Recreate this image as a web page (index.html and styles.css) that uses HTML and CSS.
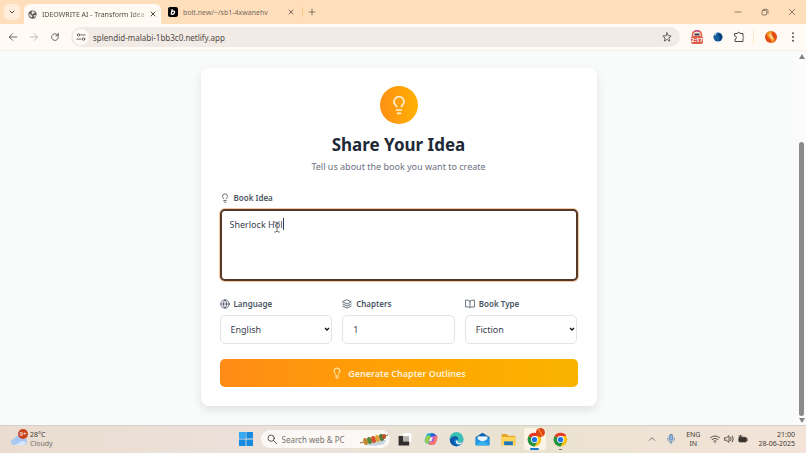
FILE: index.html
```html
<!DOCTYPE html>
<html lang="en">
<head>
    <meta charset="UTF-8">
    <meta name="viewport" content="width=device-width, initial-scale=1.0">
    <title>IDEOWRITE AI - Transform Idea</title>
    <link rel="stylesheet" href="styles.css">
</head>
<body>
    <!-- shared icons -->
    <svg class="defs" aria-hidden="true">
        <symbol id="bulb" viewBox="0 0 24 24"><path d="M15 14c.2-1 .7-1.700 1.500-2.500 1-.9 1.500-2.200 1.500-3.500A6 6 0 0 0 6 8c0 1 .2 2.200 1.500 3.500.7.7 1.300 1.500 1.500 2.500M9 18h6M10 22h4"/></symbol>
        <symbol id="close" viewBox="0 0 24 24"><path d="M4 4l16 16M20 4L4 20"/></symbol>
        <symbol id="chevron" viewBox="0 0 24 24"><path d="M4 8l8 8 8-8"/></symbol>
        <symbol id="globe" viewBox="0 0 24 24"><circle cx="12" cy="12" r="10"/><path d="M12 2a14.500 14.500 0 0 0 0 20 14.500 14.500 0 0 0 0-20M2 12h20"/></symbol>
        <symbol id="chrome" viewBox="0 0 24 24">
            <circle cx="12" cy="12" r="11" fill="#fbc116"/>
            <path d="M12 12L2.500 6.500A11 11 0 0 1 21.500 6.500H12z" fill="#e33b2e"/>
            <path d="M2.500 6.500A11 11 0 0 0 12 23l4.800-8.300L12 12z" fill="#229342"/>
            <circle cx="12" cy="12" r="5.500" fill="#fff"/>
            <circle cx="12" cy="12" r="4.200" fill="#1a73e8"/>
        </symbol>
    </svg>

    <!-- browser tabs -->
    <header class="tabs">
        <button class="tab-search" aria-label="Search tabs"><svg class="icon bold s6"><use href="#chevron"/></svg></button>
        <div class="tab active">
            <svg class="s9" viewBox="0 0 24 24"><circle cx="12" cy="12" r="11" fill="#5c5a5a"/><path d="M3 10c4 0 3 3 6 4s3 3 1 6c-4-1-7-5-7-10zM11 3c3 0 6 1 8 4-2 2-4 0-5 3s-4 1-5-2c0-2 2-2 2-5zM15 14l6-1c0 3-2 5-4 6z" fill="#eee8e2"/></svg>
            <span class="tab-title">IDEOWRITE AI - Transform Idea</span>
            <button aria-label="Close tab"><svg class="icon bold s6"><use href="#close"/></svg></button>
        </div>
        <div class="tab">
            <svg class="s10" viewBox="0 0 24 24"><rect width="24" height="24" rx="5" fill="#050505"/><path d="M10 5L7.500 18M8 12c4-4 9-2 7.500 2s-6 4.500-8 2" fill="none" stroke="#fff" stroke-width="3"/></svg>
            <span class="tab-title">bolt.new/~/sb1-4xwanehv</span>
            <button aria-label="Close tab"><svg class="icon bold s6"><use href="#close"/></svg></button>
        </div>
        <button class="new-tab" aria-label="New tab"><svg class="icon s8" viewBox="0 0 24 24"><path d="M12 3v18M3 12h18"/></svg></button>
        <div class="window-buttons">
            <button aria-label="Minimize"><svg class="icon s8" viewBox="0 0 24 24"><path d="M3 12h18"/></svg></button>
            <button aria-label="Restore"><svg class="icon s8" viewBox="0 0 24 24"><rect x="3" y="7" width="14" height="14" rx="3"/><path d="M8 4h9a4 4 0 0 1 4 4v8"/></svg></button>
            <button aria-label="Close"><svg class="icon s8"><use href="#close"/></svg></button>
        </div>
    </header>

    <!-- address bar -->
    <nav class="toolbar">
        <button aria-label="Back"><svg class="icon s10" viewBox="0 0 24 24"><path d="M21 12H4M11 4l-8 8 8 8"/></svg></button>
        <button class="disabled" aria-label="Forward"><svg class="icon s10" viewBox="0 0 24 24"><path d="M3 12h17M13 4l8 8-8 8"/></svg></button>
        <button aria-label="Reload"><svg class="icon s10" viewBox="0 0 24 24"><path d="M20 12a8 8 0 1 1-3-6l3 3M20 3v6h-6"/></svg></button>
        <div class="address">
            <button class="site-info" aria-label="Site information"><svg class="icon s10" viewBox="0 0 24 24"><circle cx="6" cy="7" r="3"/><circle cx="18" cy="17" r="3"/><path d="M12 7h10M2 17h10"/></svg></button>
            <input type="text" value="splendid-malabi-1bb3c0.netlify.app" aria-label="Address">
            <button aria-label="Bookmark"><svg class="icon s10" viewBox="0 0 24 24"><path d="M12 2l3 7 7 .6-5.400 4.900L18.500 22 12 17.800 5.500 22l1.900-7.500L2 9.600 9 9z"/></svg></button>
        </div>
        <div class="extensions">
            <button class="timer" aria-label="Recorder"><svg viewBox="0 0 24 12"><path d="M3 12V9q0-7 9-7t9 7v3" fill="#f7e7dd" stroke="#e0604c" stroke-width="3"/><path d="M7 2q5-2 10 0" fill="none" stroke="#a44bbd" stroke-width="2"/><path d="M7 9h10" stroke="#3d3a42" stroke-width="4"/></svg><span>2:17</span></button>
            <button aria-label="Extension"><svg class="s10" viewBox="0 0 24 24"><circle cx="12" cy="12" r="11" fill="#175b9d"/><path d="M12 3q9 1 10 9-2 8-9 10 4-4 3-9t-4-10z" fill="#083b70"/><path d="M2 8q3-6 9-7-4 2-4 7z" fill="#c4e3f4"/></svg></button>
            <button aria-label="Extensions"><svg class="icon s12" viewBox="0 0 24 24"><path d="M4 5h5a2.500 2.500 0 0 1 5 0h6v6a2.500 2.500 0 0 1 0 4v6H4v-5a2.500 2.500 0 0 0 0-6z"/></svg></button>
        </div>
        <button class="profile" aria-label="Profile"><svg viewBox="0 0 24 24"><circle cx="12" cy="12" r="12" fill="#e34d16"/><path d="M4 4q6-5 12-3-5 3-3 7l7 9q-3 6-8 6 2-5-3-8T4 4z" fill="#f69a20"/><path d="M8 7l4-2 5 11-4 1z" fill="#ffd593"/></svg></button>
        <button aria-label="Menu"><svg class="s10" viewBox="0 0 24 24"><g fill="#514b47"><circle cx="12" cy="3" r="2.300"/><circle cx="12" cy="12" r="2.300"/><circle cx="12" cy="21" r="2.300"/></g></svg></button>
    </nav>

    <div class="viewport">
        <main class="page">
            <form class="card">
                <div class="badge"><svg class="icon s20"><use href="#bulb"/></svg></div>
                <h1>Share Your Idea</h1>
                <p class="subtitle">Tell us about the book you want to create</p>

                <label class="label" for="idea"><svg class="icon s10"><use href="#bulb"/></svg>Book Idea</label>
                <div class="idea-box">
                    <textarea id="idea">Sherlock Hol</textarea>
                    <span class="caret"></span>
                    <svg class="pointer" viewBox="0 0 8 12"><path d="M1 1h2l1 1 1-1h2M4 2v8M1 11h2l1-1 1 1h2"/></svg>
                </div>

                <div class="fields">
                    <div class="field">
                        <label class="label" for="language"><svg class="icon s10"><use href="#globe"/></svg>Language</label>
                        <div class="select-box">
                            <select id="language"><option>English</option></select>
                            <svg class="arrow"><use href="#chevron"/></svg>
                        </div>
                    </div>
                    <div class="field">
                        <label class="label" for="chapters"><svg class="icon s10" viewBox="0 0 24 24"><path d="M12 2l10 5-10 5L2 7zM2 12l10 5 10-5M2 17l10 5 10-5"/></svg>Chapters</label>
                        <input type="text" inputmode="numeric" id="chapters" value="1">
                    </div>
                    <div class="field">
                        <label class="label" for="type"><svg class="icon s10" viewBox="0 0 24 24"><path d="M12 6q-1-3-4-3H1v16h7q3 0 4 2 1-2 4-2h7V3h-7q-3 0-4 3zv15"/></svg>Book Type</label>
                        <div class="select-box">
                            <select id="type"><option>Fiction</option></select>
                            <svg class="arrow"><use href="#chevron"/></svg>
                        </div>
                    </div>
                </div>

                <button type="button" class="generate"><svg class="icon s12"><use href="#bulb"/></svg>Generate Chapter Outlines</button>
            </form>
        </main>
        <div class="scrollbar">
            <svg viewBox="0 0 6 5"><path d="M3 0l3 5H0z"/></svg>
            <div class="thumb"></div>
            <svg viewBox="0 0 6 5"><path d="M3 5l3-5H0z"/></svg>
        </div>
    </div>

    <!-- taskbar -->
    <footer class="taskbar">
        <div class="weather">
            <div class="weather-icon">
                <svg viewBox="0 0 16 12"><path d="M3 12a3 3 0 0 1 0-6 5 5 0 0 1 9-1 3.500 3.500 0 0 1 1 7z" fill="#a9c8f3"/><path d="M3 12q5-1 8-4 3 0 4 2-1 2-3 2z" fill="#d9e8fb"/></svg>
                <span>9+</span>
            </div>
            <div>28°C<br><span class="muted">Cloudy</span></div>
        </div>
        <div class="apps">
            <button aria-label="Start"><svg class="s14" viewBox="0 0 14 14"><path d="M0 0h6.600v6.600H0zM7.400 0H14v6.600H7.400zM0 7.400h6.600V14H0zM7.400 7.400H14V14H7.400z" fill="#168be0"/><path d="M0 0h6.600v6.600H0z" fill="#36a9ef"/></svg></button>
            <div class="search">
                <svg class="icon s10" viewBox="0 0 24 24"><circle cx="10" cy="10" r="7.500"/><path d="M16 16l7 7"/></svg>
                <input type="text" placeholder="Search web &amp; PC" aria-label="Search">
                <svg class="kebab" viewBox="0 0 28 13"><path d="M4 10q10-5 22-3l-2 4q-8 3-19 1z" fill="#c6d3de"/><path d="M0 10L28 2" stroke="#9b6a3c"/><g stroke-width="4" stroke-linecap="round"><path d="M5 7l1 3" stroke="#c88b35"/><path d="M9 6l1 3" stroke="#58883b"/><path d="M13 5l1 3" stroke="#d8502e"/><path d="M17 4l1 3" stroke="#e0a43b"/><path d="M21 3l1 3" stroke="#577b36"/><path d="M24 3l0 1" stroke="#b9552d"/></g></svg>
            </div>
            <button aria-label="Task view"><svg class="s14" viewBox="0 0 24 24"><path d="M8 2h15v15H8z" fill="#fff"/><path d="M1 7h8v9h10v7H1z" fill="#302e2d"/><path d="M9 7h10v9H9z" fill="#b8b3ae"/></svg></button>
            <button aria-label="Copilot"><svg class="s14" viewBox="0 0 24 24"><path d="M8 2h8l-4 14q-1 4-5 4-5 0-6-4 0-4 3-10 1-4 4-4z" fill="#1baed3"/><path d="M2 13q2-7 5-7h5L9 17q-1 3-4 3-4-1-3-7z" fill="#9acb51"/><path d="M16 22H8l4-14q1-4 5-4 6 0 6 5-1 6-3 10-1 3-4 3z" fill="#b65ad4"/><path d="M10 17h6l3-11q4 1 4 5l-3 8q-1 3-4 3H8q2-1 2-5z" fill="#f57c62"/><path d="M12 2h4q3 0 4 5h-5q-2 0-3 3-2-4 0-8z" fill="#2464d4"/><path d="M11 9h4l-2 7H9z" fill="#f3ebe6"/></svg></button>
            <button aria-label="Edge"><svg class="s15" viewBox="0 0 24 24"><circle cx="12" cy="12" r="11" fill="#1279c8"/><path d="M1 11a11 11 0 0 1 22 0q0 6-6 6-4 0-3-3 2-3-2-6Q7 6 1 11z" fill="#39c2b4"/><path d="M5 8q9-4 10 4-6-4-7 2-1 6 7 8-9 2-13-6 0-5 3-8z" fill="#0d56a6"/><path d="M14 14q-1 3 3 3 3 0 5-1-2 4-6 4-6-1-5-7z" fill="#e9f4f5"/></svg></button>
            <button aria-label="Mail"><svg class="s15" viewBox="0 0 24 24"><path d="M1 8l11-7 11 7v13H1z" fill="#0864b1"/><path d="M4 7h16v8H4z" fill="#eaf5fc"/><path d="M1 9l11 7 11-7v12H1z" fill="#2798e6"/><path d="M1 21l11-7 11 7z" fill="#38b3f0"/></svg></button>
            <button aria-label="File Explorer"><svg class="s15" viewBox="0 0 24 24"><path d="M1 3h8l3 3h11v15H1z" fill="#e7a72c"/><path d="M1 8h22v13H1z" fill="#ffd45b"/><path d="M5 15h14v6H5z" fill="#1b77bc"/></svg></button>
            <button class="open current" aria-label="Chrome"><svg class="s15"><use href="#chrome"/></svg><span></span></button>
            <button class="open" aria-label="Chrome"><svg class="s15"><use href="#chrome"/></svg></button>
        </div>
        <div class="tray">
            <svg class="icon s8" viewBox="0 0 24 24"><path d="M4 16l8-8 8 8"/></svg>
            <svg class="icon mic s10" viewBox="0 0 24 24"><rect x="8" y="1" width="8" height="14" rx="4" fill="#8eb4df"/><path d="M4 10q0 9 8 9t8-9M12 19v4"/></svg>
            <div class="lang">ENG<br>IN</div>
            <div class="status">
                <svg class="icon s10" viewBox="0 0 24 24"><path d="M1 9q11-9 22 0M5 13q7-6 14 0M9 17q3-3 6 0M12 20v1"/></svg>
                <svg class="icon s10" viewBox="0 0 24 24"><path d="M2 9h4l6-5v16l-6-5H2zM16 8q3 4 0 8M20 5q5 7 0 14"/></svg>
                <svg class="icon s10" viewBox="0 0 24 24"><rect x="2" y="8" width="18" height="11" rx="2" fill="#38322f"/><path d="M22 11v5M6 3v7M2 5h8"/></svg>
            </div>
            <div class="clock">21:00<br>28-06-2025</div>
        </div>
    </footer>
</body>
</html>
```
FILE: styles.css
```css
* {
    box-sizing: border-box;
}
body {
    display: flex;
    flex-direction: column;
    min-height: 100vh;
    margin: 0;
    font-family: "Noto Sans", "Open Sans", sans-serif;
    font-size: 9px;
    color: #374151;
    background-color: #f9fbfb;
}
button, input, select, textarea {
    font-family: inherit;
    font-size: inherit;
    color: inherit;
}
button {
    display: flex;
    align-items: center;
    justify-content: center;
    padding: 0;
    border: none;
    background: none;
    cursor: pointer;
}
svg {
    display: block;
    flex-shrink: 0;
}
.defs {
    position: absolute;
    width: 0;
    height: 0;
}
.icon {
    fill: none;
    stroke: currentColor;
    stroke-width: 2;
    stroke-linecap: round;
    stroke-linejoin: round;
}
.bold {
    stroke-width: 4;
}
.s6 { width: 6px; height: 6px; }
.s8 { width: 8px; height: 8px; }
.s9 { width: 9px; height: 9px; }
.s10 { width: 10px; height: 10px; }
.s12 { width: 12px; height: 12px; }
.s14 { width: 14px; height: 14px; }
.s15 { width: 15px; height: 15px; }
.s20 { width: 20px; height: 20px; }

/* tabs */
.tabs {
    display: flex;
    align-items: center;
    height: 24px;
    padding: 0 6px 0 4px;
    font-size: 7px;
    color: #54493f;
    background-color: #ffdfbb;
}
.tab-search {
    width: 16px;
    height: 16px;
    border-radius: 5px;
    background-color: #ffeddb;
}
.tab {
    display: flex;
    align-items: center;
    gap: 5px;
    width: 141px;
    height: 20px;
    padding: 0 8px 0 7px;
    color: #77695c;
}
.tab.active {
    align-self: flex-end;
    width: 137px;
    margin-left: 4px;
    padding: 0 7px 0 4px;
    color: #54493f;
    border-radius: 6px 6px 0 0;
    background-color: #fffaf4;
}
.tab-title {
    flex: 1;
    white-space: nowrap;
}
.active .tab-title {
    mask-image: linear-gradient(to right, #000 85%, rgba(0, 0, 0, 0.3));
}
.new-tab {
    height: 10px;
    padding-left: 5px;
    border-left: 1px solid #ffc87f;
}
.window-buttons {
    display: flex;
    gap: 19px;
    margin-left: auto;
    padding-right: 4px;
}

/* address bar */
.toolbar {
    display: flex;
    align-items: center;
    gap: 11px;
    height: 27px;
    padding: 0 8px;
    color: #514b47;
    border-bottom: 1px solid #f4efeb;
    background-color: #fffaf4;
}
.disabled {
    color: #b5afa9;
}
.address {
    display: flex;
    flex: 1;
    align-items: center;
    height: 20px;
    padding: 0 8px 0 2px;
    border-radius: 10px;
    background-color: #f2eae5;
}
.address input {
    flex: 1;
    padding: 0 4px;
    font-size: 8px;
    border: none;
    background: none;
}
.site-info {
    width: 16px;
    height: 16px;
    border-radius: 50%;
    background-color: #fffaf6;
}
.extensions {
    display: flex;
    align-items: center;
    gap: 10px;
    padding-right: 8px;
    border-right: 1px solid #ffe6c4;
}
.timer {
    flex-direction: column;
}
.timer svg {
    width: 12px;
    height: 6px;
}
.timer span {
    font-size: 6px;
    font-weight: bold;
    line-height: 8px;
    color: #fff;
    border-radius: 2px;
    background-color: #dd5c4b;
}
.profile svg {
    width: 12px;
    height: 12px;
}

/* page */
.viewport {
    display: flex;
    flex: 1;
}
.page {
    flex: 1;
    padding: 17px 16px 19px;
}
.card {
    max-width: 396px;
    margin: 0 auto;
    padding: 18px 19px 19px;
    border-radius: 8px;
    background-color: #fff;
    box-shadow: 0 4px 10px rgba(0, 0, 0, 0.1);
}
.badge {
    display: flex;
    align-items: center;
    justify-content: center;
    width: 38px;
    height: 38px;
    margin: 0 auto;
    color: #fff0d5;
    border-radius: 50%;
    background-image: linear-gradient(to right, #ff9014, #ffb000);
}
h1 {
    margin: 9px 0 0;
    font-size: 17px;
    line-height: 24px;
    text-align: center;
    color: #1f2937;
}
.subtitle {
    margin: 2px 0 16px;
    line-height: 16px;
    text-align: center;
    color: #6b7280;
}
.label {
    display: flex;
    align-items: center;
    gap: 4px;
    margin-bottom: 4px;
    font-size: 8px;
    font-weight: 600;
    line-height: 14px;
    color: #4b5563;
}
.idea-box {
    position: relative;
    height: 72px;
    margin-bottom: 16px;
}
textarea {
    display: block;
    width: 100%;
    height: 100%;
    padding: 7px 8px;
    line-height: 14px;
    border: 2px solid #54392a;
    border-radius: 5px;
    outline: none;
    resize: none;
    box-shadow: 0 0 0 1px #f5c8a0;
}
.caret {
    position: absolute;
    top: 9px;
    left: 63px;
    width: 1px;
    height: 12px;
    background-color: #374151;
}
.pointer {
    position: absolute;
    top: 12px;
    left: 53px;
    width: 8px;
    height: 12px;
    fill: none;
    stroke: #777;
}
.fields {
    display: grid;
    grid-template-columns: repeat(3, 1fr);
    gap: 10px;
    margin-bottom: 15px;
}
.select-box {
    position: relative;
}
.field input, select {
    display: block;
    width: 100%;
    height: 29px;
    padding: 0 10px;
    border: 1px solid #e2e4e8;
    border-radius: 5px;
    background-color: #fff;
    appearance: none;
}
.arrow {
    position: absolute;
    top: 11px;
    right: 2px;
    width: 6px;
    height: 6px;
    fill: none;
    stroke: #111;
    stroke-width: 5;
}
.generate {
    gap: 5px;
    width: 100%;
    height: 28px;
    font-weight: 600;
    color: #fff3dc;
    border-radius: 5px;
    background-image: linear-gradient(to right, #ff8b17, #ffa500 55%, #fab300);
}
.scrollbar {
    display: flex;
    flex-direction: column;
    align-items: center;
    gap: 2px;
    width: 9px;
    padding: 3px 0 2px;
    background-color: #fbfbfb;
}
.scrollbar svg {
    width: 6px;
    height: 5px;
    fill: #858585;
}
.thumb {
    flex: 1;
    width: 5px;
    margin-top: 81px;
    border-radius: 3px;
    background-color: #8b8b8b;
}

/* taskbar */
.taskbar {
    display: grid;
    grid-template-columns: 1fr auto 1fr;
    align-items: center;
    height: 28px;
    padding: 0 11px 1px;
    font-size: 7px;
    line-height: 9px;
    color: #403a36;
    border-top: 1px solid #d5cfc9;
    background-image: linear-gradient(to right, #eaddd0, #ece2dc 35%, #eae3d1 65%, #f3e3d8);
}
.weather {
    display: flex;
    align-items: center;
    gap: 3px;
}
.weather-icon {
    position: relative;
}
.weather-icon svg {
    width: 16px;
    height: 12px;
}
.weather-icon span {
    position: absolute;
    top: -4px;
    left: 7px;
    width: 10px;
    font-size: 6px;
    line-height: 10px;
    text-align: center;
    color: #fff;
    border-radius: 50%;
    background-color: #c9431f;
}
.muted {
    color: #77706a;
}
.apps {
    display: flex;
    align-items: center;
    gap: 4px;
}
.apps button {
    position: relative;
    width: 22px;
    height: 22px;
}
.search {
    display: flex;
    align-items: center;
    gap: 5px;
    width: 129px;
    height: 18px;
    padding: 0 2px 0 6px;
    border-radius: 9px;
    background-color: #fbf8f5;
}
.search input {
    flex: 1;
    min-width: 0;
    padding: 0;
    font-size: 8px;
    border: none;
    background: none;
}
.search input::placeholder {
    color: #77706b;
}
.kebab {
    width: 28px;
    height: 13px;
}
.apps .current {
    border-radius: 3px;
    background-color: #faf3e8;
}
.current span {
    position: absolute;
    top: 0;
    right: 1px;
    width: 9px;
    height: 9px;
    border-radius: 50%;
    background-image: linear-gradient(60deg, #e04616 40%, #f58a35 50%, #dc4316 60%);
}
.open::after {
    content: "";
    position: absolute;
    bottom: 0;
    width: 3px;
    height: 1px;
    background-color: #77706a;
}
.current::after {
    width: 9px;
    height: 2px;
    border-radius: 1px;
    background-color: #1679c9;
}
.tray {
    display: flex;
    align-items: center;
    justify-content: flex-end;
    gap: 10px;
}
.mic {
    color: #527fb4;
}
.lang {
    text-align: center;
}
.status {
    display: flex;
    gap: 4px;
}
.clock {
    text-align: right;
}
```
